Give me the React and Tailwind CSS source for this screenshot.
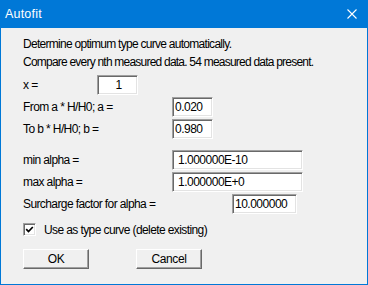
import React from 'react';

const sunken = "bg-white border border-t-[#a0a0a0] border-l-[#a0a0a0] border-r-white border-b-white shadow-[inset_1px_1px_0_#696969,inset_-1px_-1px_0_#e3e3e3]";

const Field = ({ value, width, align = 'left', pad = 'pl-[2px]' }) => (
  <input
    readOnly
    defaultValue={value}
    className={`h-[20px] ${width} ${pad} ${sunken} text-[12px] tracking-[-0.5px] text-black outline-none ${align === 'center' ? 'text-center' : 'text-left'}`}
  />
);

const Row = ({ label, labelWidth, className = 'mt-[2px]', children }) => (
  <div className={`flex items-center h-[20px] ${className}`}>
    <span className={`${labelWidth} shrink-0 text-[12px] tracking-[-0.6px]`}>{label}</span>
    {children}
  </div>
);

const Button = ({ children }) => (
  <button className="w-[66px] h-[20px] bg-[#f0f0f0] border border-t-white border-l-white border-r-[#696969] border-b-[#696969] shadow-[inset_-1px_-1px_0_#a0a0a0] text-[12px] tracking-[-0.4px] text-black">
    {children}
  </button>
);

export default function App() {
  return (
    <div className="w-[368px] h-[285px] flex flex-col border border-[#0078d7] bg-[#f0f0f0] overflow-hidden text-black font-['Liberation_Sans',Arial,sans-serif]">
      {/* title bar */}
      <div className="h-[27px] shrink-0 bg-[#0078d7] flex items-center justify-between pl-[4px] pr-[10px]">
        <span className="text-white text-[12.5px] tracking-[0.2px]">Autofit</span>
        <svg width="10" height="10" viewBox="0 0 10 10" className="mb-[2px]">
          <path d="M0.5 0.5 L9.5 9.5 M9.5 0.5 L0.5 9.5" stroke="#fff" strokeWidth="1.1" fill="none" />
        </svg>
      </div>

      <div className="flex-1 flex flex-col pl-[22px] pt-[7px]">
        <div className="h-[18px] flex items-center text-[12px] tracking-[-0.72px]">Determine optimum type curve automatically.</div>
        <div className="h-[18px] flex items-center text-[12px] tracking-[-0.78px]">Compare every nth measured data. 54 measured data present.</div>

        <Row label="x =" labelWidth="w-[74px]" className="mt-[4px]">
          <Field value="1" width="w-[41px]" align="center" />
        </Row>
        <Row label="From a * H/H0; a =" labelWidth="w-[149px]">
          <Field value="0.020" width="w-[41px]" />
        </Row>
        <Row label="To b * H/H0; b =" labelWidth="w-[149px]">
          <Field value="0.980" width="w-[41px]" />
        </Row>

        <Row label="min alpha =" labelWidth="w-[149px]" className="mt-[11px]">
          <Field value="1.000000E-10" width="w-[131px]" pad="pl-[5px]" />
        </Row>
        <Row label="max alpha =" labelWidth="w-[149px]">
          <Field value="1.000000E+0" width="w-[131px]" pad="pl-[5px]" />
        </Row>
        <Row label="Surcharge factor for alpha =" labelWidth="w-[209px]">
          <Field value="10.000000" width="w-[65px]" />
        </Row>

        <div className="flex items-center h-[13px] mt-[9px]">
          <div className={`w-[13px] h-[13px] shrink-0 ${sunken} flex items-center justify-center`}>
            <svg width="9" height="9" viewBox="0 0 9 9">
              <path d="M1.2 4.2 L3.5 6.6 L7.8 2" stroke="#000" strokeWidth="1.7" fill="none" />
            </svg>
          </div>
          <span className="ml-[8px] text-[12px] tracking-[-0.6px]">Use as type curve (delete existing)</span>
        </div>

        <div className="flex mt-[13px] gap-[47px]">
          <Button>OK</Button>
          <Button>Cancel</Button>
        </div>
      </div>
    </div>
  );
}
